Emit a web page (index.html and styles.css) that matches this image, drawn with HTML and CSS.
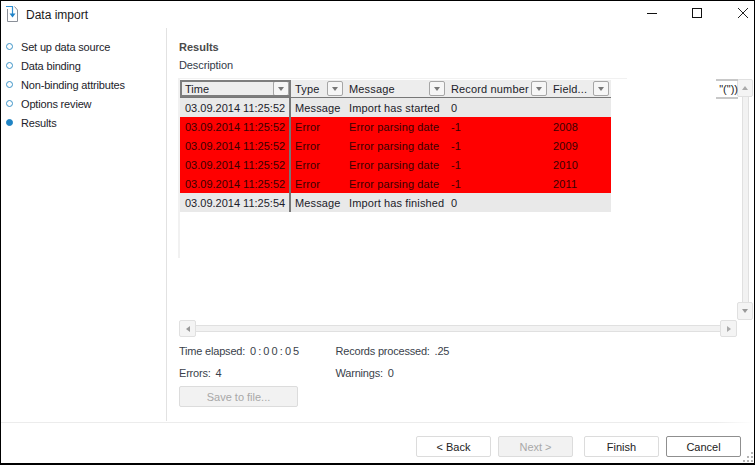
FILE: index.html
```html
<!DOCTYPE html>
<html lang="en">
<head>
<meta charset="utf-8">
<title>Data import</title>
<link rel="stylesheet" href="styles.css">
</head>
<body>
<div class="window">
  <header class="titlebar">
    <svg class="appicon" width="16" height="20" viewBox="0 0 16 20" fill="none">
      <path d="M1.5 5V17.5H11.5V6L8.5 2.5" stroke="#8a8f98"/>
      <path d="M0 2.5H6.5V11" stroke="#2f8fd0" stroke-width="1.2"/>
      <path d="M3.5 9.5H9.5L6.5 13.5Z" fill="#1f82c8"/>
    </svg>
    <span class="title">Data import</span>
    <div class="winctrls">
      <svg class="minbtn" width="12" height="12" viewBox="0 0 12 12"><path d="M1 6.5H11" stroke="#111"/></svg>
      <svg width="12" height="12" viewBox="0 0 12 12" fill="none"><rect x="1.5" y="1.5" width="9" height="9" stroke="#111"/></svg>
      <svg width="12" height="12" viewBox="0 0 12 12"><path d="M1 1L11 11M11 1L1 11" stroke="#222"/></svg>
    </div>
  </header>
  <div class="body">
    <nav class="steps">
      <div class="step"><i class="dot"></i>Set up data source</div>
      <div class="step"><i class="dot"></i>Data binding</div>
      <div class="step"><i class="dot"></i>Non-binding attributes</div>
      <div class="step"><i class="dot"></i>Options review</div>
      <div class="step"><i class="dot on"></i>Results</div>
    </nav>
    <main class="content">
      <h1 class="heading">Results</h1>
      <p class="desc">Description</p>
      <div class="gridarea">
        <div class="gridcol">
          <div class="gridtop">
            <div class="gridframe">
              <div class="topline"></div>
              <div class="table">
                <div class="row head">
                  <div class="c c1 timehead"><span>Time</span><b class="fb"><i></i></b></div>
                  <div class="c c2"><span>Type</span><b class="fb"><i></i></b></div>
                  <div class="c c3"><span>Message</span><b class="fb"><i></i></b></div>
                  <div class="c c4"><span>Record number</span><b class="fb"><i></i></b></div>
                  <div class="c c5"><span>Field...</span><b class="fb"><i></i></b></div>
                </div>
                <div class="row msg"><div class="c c1">03.09.2014 11:25:52</div><div class="c c2">Message</div><div class="c c3">Import has started</div><div class="c c4">0</div><div class="c c5"></div></div>
                <div class="row err"><div class="c c1">03.09.2014 11:25:52</div><div class="c c2">Error</div><div class="c c3">Error parsing date</div><div class="c c4">-1</div><div class="c c5">2008</div></div>
                <div class="row err"><div class="c c1">03.09.2014 11:25:52</div><div class="c c2">Error</div><div class="c c3">Error parsing date</div><div class="c c4">-1</div><div class="c c5">2009</div></div>
                <div class="row err"><div class="c c1">03.09.2014 11:25:52</div><div class="c c2">Error</div><div class="c c3">Error parsing date</div><div class="c c4">-1</div><div class="c c5">2010</div></div>
                <div class="row err"><div class="c c1">03.09.2014 11:25:52</div><div class="c c2">Error</div><div class="c c3">Error parsing date</div><div class="c c4">-1</div><div class="c c5">2011</div></div>
                <div class="row msg"><div class="c c1">03.09.2014 11:25:54</div><div class="c c2">Message</div><div class="c c3">Import has finished</div><div class="c c4">0</div><div class="c c5"></div></div>
              </div>
            </div>
            <div class="frag">"("))</div>
          </div>
          <div class="hscroll">
            <div class="sb"><i class="tri left"></i></div>
            <div class="htrack"></div>
            <div class="sb"><i class="tri right"></i></div>
          </div>
        </div>
        <div class="vscroll">
          <div class="sb"><i class="tri up"></i></div>
          <div class="vtrack"></div>
          <div class="sb"><i class="tri down"></i></div>
        </div>
      </div>
      <div class="stats">
        <div class="stat">Time elapsed: <span class="spaced">0:00:05</span></div>
        <div class="stat">Records processed: <span class="gap">.25</span></div>
        <div class="stat">Errors: <span class="gap">4</span></div>
        <div class="stat">Warnings: <span class="gap">0</span></div>
      </div>
      <button class="btn save" disabled>Save to file...</button>
    </main>
  </div>
  <div class="sep"></div>
  <footer class="footer">
    <button class="btn nav">&lt; Back</button>
    <button class="btn nav" disabled>Next &gt;</button>
    <button class="btn nav finish">Finish</button>
    <button class="btn nav cancel">Cancel</button>
    <svg class="grip" width="11" height="11" viewBox="0 0 11 11" fill="#b5b5b5">
      <rect x="8" y="0" width="2" height="2"/><rect x="4" y="4" width="2" height="2"/><rect x="8" y="4" width="2" height="2"/>
      <rect x="0" y="8" width="2" height="2"/><rect x="4" y="8" width="2" height="2"/><rect x="8" y="8" width="2" height="2"/>
    </svg>
  </footer>
</div>
</body>
</html>
```
FILE: styles.css
```css
* { box-sizing: border-box; }
html, body { margin: 0; padding: 0; }
body {
  width: 755px;
  height: 465px;
  overflow: hidden;
  background: #fff;
  font-family: "Liberation Sans", Arial, sans-serif;
  font-size: 11px;
  color: #1c1c2a;
}
.window {
  width: 755px;
  height: 465px;
  border: 1px solid #000;
  border-bottom-width: 2px;
  display: flex;
  flex-direction: column;
  position: relative;
}
.titlebar {
  height: 27px;
  flex: none;
  display: flex;
  align-items: center;
  padding-left: 5px;
}
.appicon { margin-bottom: 1px; flex: none; }
.title {
  margin-left: 4px;
  font-size: 12px;
  color: #1a1a1a;
}
.winctrls {
  margin-left: auto;
  display: flex;
  gap: 34px;
  padding-right: 5px;
  padding-bottom: 4px;
}
.minbtn { margin-right: -1px; }
.body {
  flex: 1;
  display: flex;
  min-height: 0;
}
.steps {
  width: 166px;
  flex: none;
  border-right: 1px solid #e2e2e2;
  padding-top: 9px;
  margin-right: 12px;
}
.step {
  height: 19px;
  display: flex;
  align-items: center;
  gap: 8px;
  padding-left: 5px;
  white-space: nowrap;
  letter-spacing: -0.17px;
}
.dot {
  width: 7px;
  height: 7px;
  border-radius: 50%;
  border: 1.5px solid #3d94c8;
  flex: none;
}
.dot.on { background: #1f83c4; border-color: #1f83c4; }
.content {
  flex: 1;
  min-width: 0;
  padding-top: 13px;
}
.heading {
  margin: 0;
  font-size: 11px;
  line-height: 13px;
  font-weight: bold;
  color: #4a4a4a;
}
.desc {
  margin: 5px 0 0;
  line-height: 13px;
  color: #333a48;
  letter-spacing: -0.1px;
}
.gridarea {
  display: flex;
  margin-top: 6px;
  width: 575px;
  height: 259px;
  margin-left: -1px;
}
.gridcol {
  width: 559px;
  display: flex;
  flex-direction: column;
}
.gridtop {
  height: 242px;
  position: relative;
}
.gridframe {
  width: 449px;
  height: 180px;
  border-left: 2px solid #f1f1f1;
}
.topline {
  height: 1px;
  background: #f1f1f1;
}
.table {
  width: 431px;
  margin-top: 1px;
}
.row {
  display: flex;
  height: 19px;
  line-height: 18px;
  white-space: nowrap;
  letter-spacing: 0.12px;
}
.row > .c1 { letter-spacing: 0; }
.c {
  padding-left: 5px;
  display: flex;
  align-items: center;
  overflow: hidden;
}
.c1 { width: 111px; border-right: 2px solid #777; }
.c2 { width: 54px; padding-left: 4px; }
.c3 { width: 102px; padding-left: 4px; }
.c4 { width: 102px; padding-left: 4px; }
.c5 { width: 62px; padding-left: 4px; }
.row.head {
  height: 18px;
  background: #ededed;
  border-bottom: 1px solid #777;
  letter-spacing: 0.15px;
}
.head .c { justify-content: space-between; padding-right: 2px; height: 17px; }
.head .c1 { border-right: 0; width: 111px; }
.timehead {
  outline: 2px solid #7d7d7d;
  outline-offset: -2px;
  padding-right: 3px;
}
.fb {
  width: 16px;
  height: 15px;
  border: 1px solid #a6a6a6;
  border-radius: 2px;
  background: #f6f6f6;
  display: flex;
  align-items: center;
  justify-content: center;
  flex: none;
  font-weight: normal;
}
.fb i {
  width: 0;
  height: 0;
  border-left: 3.5px solid transparent;
  border-right: 3.5px solid transparent;
  border-top: 4px solid #777;
}
.msg { background: #e9e9e9; }
.err { background: #f00; color: #3a0000; }
.frag {
  position: absolute;
  left: 538px;
  top: 1px;
  width: 22px;
  height: 20px;
  border-top: 2px solid #c8c8c8;
  border-bottom: 2px solid #c8c8c8;
  font-size: 11px;
  line-height: 16px;
  text-align: right;
  color: #222;
  white-space: nowrap;
}
.hscroll {
  height: 17px;
  display: flex;
  align-items: center;
  margin-left: 1px;
}
.sb {
  width: 17px;
  height: 17px;
  border: 1px solid #e0e0e0;
  border-radius: 2px;
  background: #f4f4f4;
  display: flex;
  align-items: center;
  justify-content: center;
  flex: none;
}
.htrack {
  flex: 1;
  height: 7px;
  background: #f2f2f2;
  border-top: 1px solid #e0e0e0;
  border-bottom: 1px solid #e0e0e0;
}
.vscroll {
  width: 16px;
  margin-top: 1px;
  height: 241px;
  display: flex;
  flex-direction: column;
  align-items: center;
}
.vscroll .sb { width: 16px; height: 18px; }
.vtrack {
  flex: 1;
  width: 7px;
  background: #f2f2f2;
  border-left: 1px solid #e0e0e0;
  border-right: 1px solid #e0e0e0;
}
.tri { width: 0; height: 0; display: block; }
.tri.up { border-left: 3.5px solid transparent; border-right: 3.5px solid transparent; border-bottom: 4px solid #aaa; }
.tri.down { border-left: 3.5px solid transparent; border-right: 3.5px solid transparent; border-top: 4px solid #999; }
.tri.left { border-top: 3.5px solid transparent; border-bottom: 3.5px solid transparent; border-right: 4px solid #999; }
.tri.right { border-top: 3.5px solid transparent; border-bottom: 3.5px solid transparent; border-left: 4px solid #aaa; }
.stats {
  display: grid;
  grid-template-columns: 156.5px auto;
  grid-auto-rows: 22px;
  margin-top: 8px;
  line-height: 13px;
  color: #3a3f4b;
  letter-spacing: -0.2px;
}
.stat { white-space: nowrap; }
.spaced { letter-spacing: 2.1px; margin-left: 2px; }
.gap { margin-left: 2px; }
.btn {
  font-family: inherit;
  font-size: 11px;
  height: 21px;
  border: 1px solid #dcdcdc;
  border-radius: 2px;
  background: #fff;
  color: #222;
  padding: 0;
}
.btn:disabled {
  background: #f2f2f2;
  color: #a8a8a8;
}
.save {
  display: block;
  width: 119px;
  margin-top: -3px;
}
.sep {
  height: 1px;
  flex: none;
  background: linear-gradient(to right, #ececec 95%, #fff);
  margin-top: 1px;
}
.footer {
  height: 40px;
  flex: none;
  display: flex;
  align-items: flex-start;
  padding: 13px 0 0 415px;
  position: relative;
}
.nav { width: 75px; height: 21px; margin-right: 7px; }
.finish { margin-left: 4px; margin-right: 7px; }
.cancel { border-color: #8f8f8f; margin-right: 0; }
.grip {
  position: absolute;
  right: 0;
  bottom: 0;
}
```
